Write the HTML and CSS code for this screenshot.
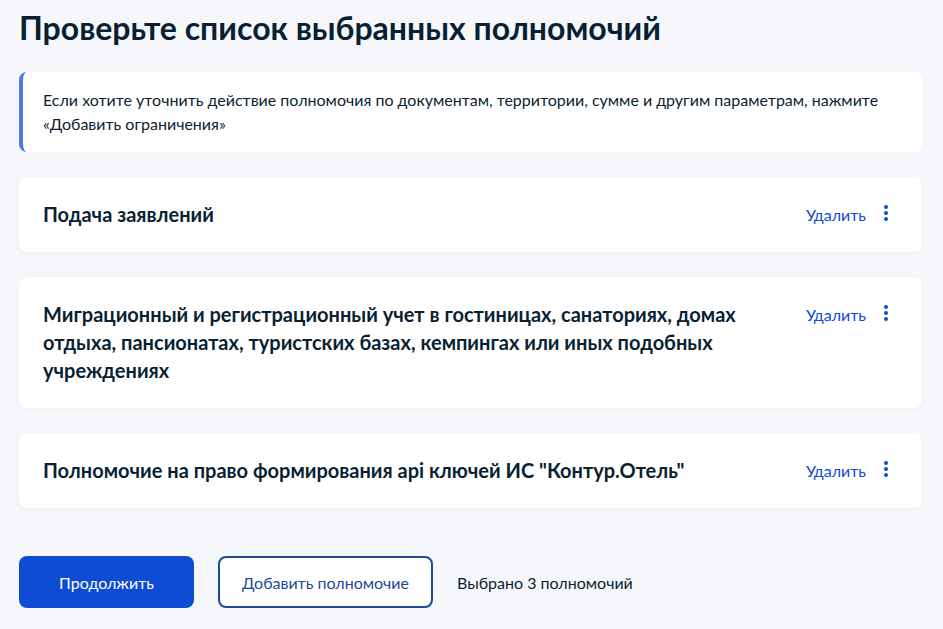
FILE: index.html
```html
<!DOCTYPE html>
<html lang="ru">
<head>
    <meta charset="UTF-8">
    <title>Проверьте список выбранных полномочий</title>
    <link rel="stylesheet" href="styles.css">
</head>
<body>
    <div class="page">
        <h1 class="title">Проверьте список выбранных полномочий</h1>

        <div class="info">
            Если хотите уточнить действие полномочия по документам, территории, сумме и другим параметрам, нажмите «Добавить ограничения»
        </div>

        <div class="card">
            <div class="card-name">Подача заявлений</div>
            <div class="card-actions">
                <a class="link" href="#">Удалить</a>
                <span class="dots"><i></i><i></i><i></i></span>
            </div>
        </div>

        <div class="card">
            <div class="card-name">Миграционный и регистрационный учет в гостиницах, санаториях, домах отдыха, пансионатах, туристских базах, кемпингах или иных подобных учреждениях</div>
            <div class="card-actions">
                <a class="link" href="#">Удалить</a>
                <span class="dots"><i></i><i></i><i></i></span>
            </div>
        </div>

        <div class="card">
            <div class="card-name">Полномочие на право формирования api ключей ИС "Контур.Отель"</div>
            <div class="card-actions">
                <a class="link" href="#">Удалить</a>
                <span class="dots"><i></i><i></i><i></i></span>
            </div>
        </div>

        <div class="footer">
            <button class="btn btn-primary">Продолжить</button>
            <button class="btn btn-outline">Добавить полномочие</button>
            <span class="count">Выбрано 3 полномочий</span>
        </div>
    </div>
</body>
</html>
```

FILE: styles.css
```css
body {
    margin: 0;
    background-color: #f5f7fb;
    font-family: Lato, "Noto Sans", sans-serif;
    color: #0b1f33;
}
.page {
    padding: 0 21px 0 19px;
}
.title {
    margin: 0;
    padding-top: 8px;
    font-size: 32px;
    line-height: 40px;
    font-weight: 700;
}
.info {
    margin-top: 24px;
    background: #ffffff;
    border-left: 4px solid #4b7be5;
    border-radius: 8px;
    padding: 16px 20px;
    font-size: 16px;
    line-height: 24px;
}
.card {
    display: flex;
    justify-content: space-between;
    align-items: flex-start;
    margin-top: 25px;
    background: #ffffff;
    border-radius: 8px;
    padding: 23px 34px 24px 24px;
    box-shadow: 0 1px 4px rgba(11, 31, 51, 0.04);
}
.card-name {
    max-width: 720px;
    font-size: 20px;
    line-height: 28px;
    font-weight: 700;
}
.card-actions {
    display: flex;
    align-items: center;
    gap: 18px;
    height: 28px;
    padding-left: 30px;
    flex-shrink: 0;
}
.link {
    color: #0d4cd3;
    font-size: 16px;
    text-decoration: none;
}
.dots {
    display: flex;
    flex-direction: column;
    gap: 2px;
    width: 4px;
    align-items: center;
    margin-top: -2px;
}
.dots i {
    display: block;
    width: 4px;
    height: 4px;
    border-radius: 50%;
    background: #0d4cd3;
}
.footer {
    display: flex;
    align-items: center;
    gap: 24px;
    margin-top: 48px;
}
.btn {
    font-family: inherit;
    font-size: 16px;
    height: 52px;
    border-radius: 8px;
    padding: 0 16px;
    white-space: nowrap;
    cursor: pointer;
}
.btn-primary {
    width: 175px;
    background: #0d4cd3;
    border: none;
    color: #ffffff;
}
.btn-outline {
    width: 215px;
    background: #ffffff;
    border: 2px solid #1d4a94;
    color: #1d4a94;
}
.count {
    font-size: 16px;
}
```
